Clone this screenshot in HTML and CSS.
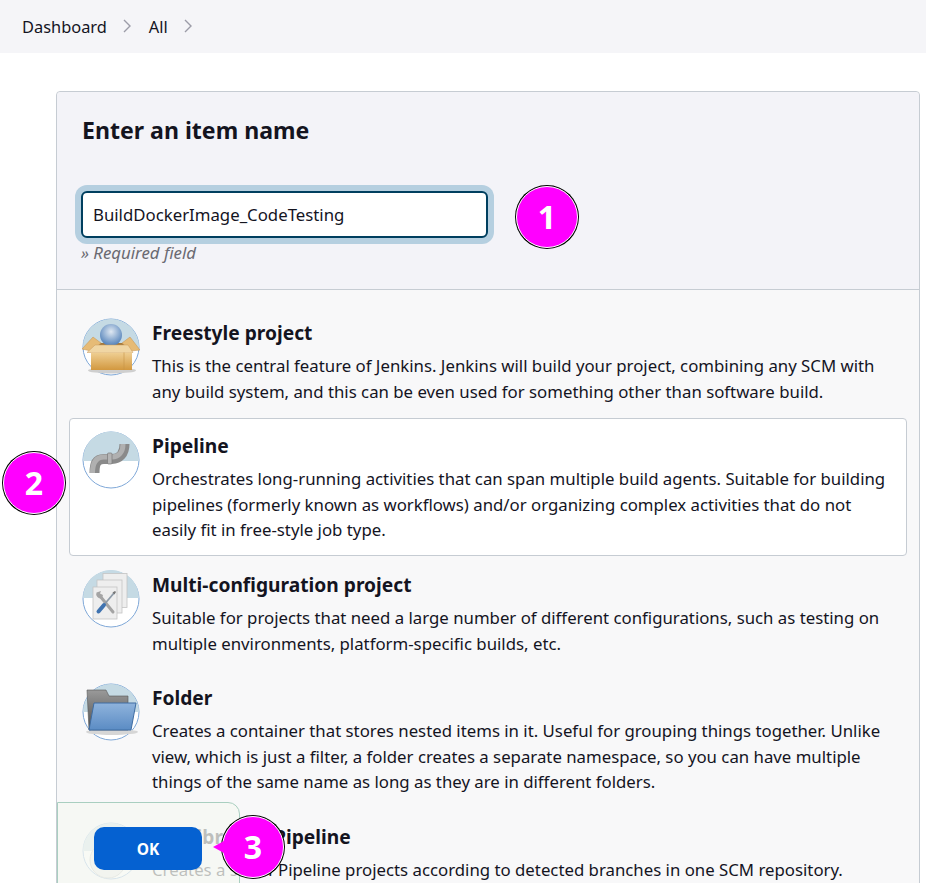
FILE: index.html
```html
<!DOCTYPE html>
<html lang="en">
<head>
<meta charset="UTF-8">
<meta name="viewport" content="width=device-width, initial-scale=1.0">
<title>New Item</title>
<link rel="stylesheet" href="styles.css">
</head>
<body>
<nav class="breadcrumb">
    <a class="crumb">Dashboard</a>
    <svg class="chevron" viewBox="0 0 10 16"><path d="M2 2l6 6-6 6"/></svg>
    <a class="crumb">All</a>
    <svg class="chevron" viewBox="0 0 10 16"><path d="M2 2l6 6-6 6"/></svg>
</nav>

<main class="panel">
    <section class="name_section">
        <h2 class="name_title">Enter an item name</h2>
        <div class="name_input">BuildDockerImage_CodeTesting</div>
        <p class="required">» Required field</p>
    </section>

    <ul class="item_list">
        <li class="item">
            <svg class="item_icon" viewBox="0 0 58 58">
                <defs>
                    <radialGradient id="ball" cx="0.5" cy="0.35" r="0.65"><stop offset="0" stop-color="#dfe8f2"/><stop offset="1" stop-color="#4f7fb8"/></radialGradient>
                    <linearGradient id="carton" x1="0" y1="0" x2="0" y2="1"><stop offset="0" stop-color="#efcf93"/><stop offset="1" stop-color="#d2983f"/></linearGradient>
                </defs>
                <circle class="disc" cx="29" cy="29" r="28"/>
                <path class="disc_top" d="M1 29a28 28 0 0 1 56 0z"/>
                <ellipse cx="30" cy="52.500" rx="24" ry="3" fill="#cfcfcf"/>
                <path d="M12 34L18 25H42L48 34z" fill="#a47a3e"/>
                <circle cx="29" cy="17" r="11" fill="url(#ball)"/>
                <path d="M19 25L11 19 0 31 9 33z" fill="#e6bb76" stroke="#c4934e" stroke-width=".5"/>
                <path d="M40 25L48 19 58 32 49 33z" fill="#e6bb76" stroke="#c4934e" stroke-width=".5"/>
                <path d="M5 34.500L13 27H46L51 34.500z" fill="#f0d6a4" stroke="#c9995a" stroke-width=".5"/>
                <rect x="9" y="34.500" width="41" height="17.500" fill="url(#carton)"/>
                <path d="M42 34.500V52" stroke="#c79348" stroke-width=".6"/>
            </svg>
            <div class="item_body">
                <h3 class="item_title">Freestyle project</h3>
                <p class="item_desc">This is the central feature of Jenkins. Jenkins will build your project, combining any SCM with any build system, and this can be even used for something other than software build.</p>
            </div>
        </li>
        <li class="item selected">
            <svg class="item_icon" viewBox="0 0 58 58">
                <circle class="disc" cx="29" cy="29" r="28"/>
                <path class="disc_top" d="M1 30V28.500a28 28 0 0 1 56 0V30z"/>
                <path d="M42.500 13C42.500 23 37 28 30 28H22C14 28 12.500 33 12.500 42" fill="none" stroke="#8a8a8a" stroke-width="10"/>
                <path d="M41 13C41 22 36 26 30 26H22C13 26 10.500 33 10.500 42" fill="none" stroke="#b0b0b0" stroke-width="5"/>
                <rect x="25.500" y="22" width="4.500" height="11" rx="1" fill="#b5b5b5" stroke="#7a7a7a" stroke-width=".7"/>
            </svg>
            <div class="item_body">
                <h3 class="item_title">Pipeline</h3>
                <p class="item_desc">Orchestrates long-running activities that can span multiple build agents. Suitable for building pipelines (formerly known as workflows) and/or organizing complex activities that do not easily fit in free-style job type.</p>
            </div>
        </li>
        <li class="item">
            <svg class="item_icon" viewBox="0 0 58 58">
                <circle class="disc" cx="29" cy="29" r="28"/>
                <path class="disc_top" d="M1 28a28 28 0 0 1 56 0z"/>
                <rect class="page" x="21" y="3.500" width="24" height="34"/>
                <rect class="page" x="15" y="10" width="25" height="33"/>
                <rect class="page" x="11" y="17" width="24" height="32"/>
                <path d="M18 26L31 42" stroke="#a4a4a4" stroke-width="3" stroke-linecap="round"/>
                <path d="M14.500 22.500a4.200 4.200 0 0 0 5.500 5.500l1-3-3-1.500 1-2.500z" fill="#a4a4a4"/>
                <path d="M32 23L21 36" stroke="#8e9ba8" stroke-width="1.800"/>
                <path d="M30.500 22.500l2.500-1.500 1 1-1.500 2.500z" fill="#777"/>
                <path d="M22 35L16.500 41.500" stroke="#3f73b0" stroke-width="4" stroke-linecap="round"/>
            </svg>
            <div class="item_body">
                <h3 class="item_title">Multi-configuration project</h3>
                <p class="item_desc">Suitable for projects that need a large number of different configurations, such as testing on multiple environments, platform-specific builds, etc.</p>
            </div>
        </li>
        <li class="item">
            <svg class="item_icon" viewBox="0 0 58 58">
                <defs>
                    <linearGradient id="folder_back" x1="0" y1="0" x2="0" y2="1"><stop offset="0" stop-color="#9a9a9a"/><stop offset="1" stop-color="#4e4e4e"/></linearGradient>
                    <linearGradient id="folder_front" x1="0" y1="0" x2="0" y2="1"><stop offset="0" stop-color="#8fb3dc"/><stop offset="1" stop-color="#5b8cc4"/></linearGradient>
                </defs>
                <circle class="disc" cx="29" cy="29" r="28"/>
                <path class="disc_top" d="M1 29a28 28 0 0 1 56 0z"/>
                <ellipse cx="30" cy="49" rx="26" ry="3" fill="#d6d6d6"/>
                <path d="M5 7H24L27 13H46V47H7z" fill="url(#folder_back)" stroke="#555" stroke-width=".6"/>
                <path d="M12 20H54L49 47H7z" fill="url(#folder_front)" stroke="#3f6da3" stroke-width="1"/>
            </svg>
            <div class="item_body">
                <h3 class="item_title">Folder</h3>
                <p class="item_desc">Creates a container that stores nested items in it. Useful for grouping things together. Unlike view, which is just a filter, a folder creates a separate namespace, so you can have multiple things of the same name as long as they are in different folders.</p>
            </div>
        </li>
        <li class="item">
            <svg class="item_icon" viewBox="0 0 58 58">
                <circle class="disc" cx="29" cy="29" r="28"/>
                <path class="disc_top" d="M1 29a28 28 0 0 1 56 0z"/>
                <circle cx="26" cy="38" r="18" fill="#e8e8e8" stroke="#bbb"/>
            </svg>
            <div class="item_body">
                <h3 class="item_title">Multibranch Pipeline</h3>
                <p class="item_desc">Creates a set of Pipeline projects according to detected branches in one SCM repository.</p>
            </div>
        </li>
    </ul>
</main>

<div class="bottom_bar">
    <button class="ok_button">OK</button>
</div>

<div class="marker marker_one">1</div>
<div class="marker marker_two">2</div>
<div class="marker marker_three">3</div>
</body>
</html>
```

FILE: styles.css
```css
* {
    margin: 0;
    padding: 0;
    box-sizing: border-box;
    font-family: "Noto Sans", sans-serif;
}

html, body {
    height: 883px;
    overflow: hidden;
}

body {
    position: relative;
    background: #ffffff;
    color: #14141f;
    font-size: 16px;
}

.breadcrumb {
    height: 53px;
    background: #f5f5f8;
    display: flex;
    align-items: center;
    padding-left: 22px;
}

.crumb {
    color: #14141f;
    font-size: 16.400px;
    line-height: 51px;
}

.chevron {
    width: 10px;
    height: 16px;
    margin: -2px 17px 0 15px;
}

.chevron path {
    fill: none;
    stroke: #9c9ca8;
    stroke-width: 1.4;
}

.panel {
    margin: 38px 6px 0 56px;
    border: 1px solid #c6ccd3;
    border-radius: 4px;
    background: #f8f8f9;
}

.name_section {
    height: 198px;
    padding: 22px 24px 0 24px;
    background: #f3f3f8;
    border-bottom: 1px solid #c6ccd3;
    border-radius: 4px 4px 0 0;
}

.name_title {
    font-size: 23.100px;
    font-weight: 700;
    line-height: 32px;
    margin-bottom: 45px;
    padding-left: 1px;
}

.name_input {
    width: 407px;
    height: 47px;
    border: 2px solid #003f5f;
    border-radius: 6px;
    background: #ffffff;
    box-shadow: 0 0 0 6px #b5cfe0;
    padding-left: 10px;
    line-height: 44px;
    font-size: 16.800px;
}

.required {
    margin-top: 3px;
    font-size: 16.800px;
    font-style: italic;
    line-height: 24px;
    color: #6a6a72;
}

.item_list {
    list-style: none;
    padding: 15px 12px 0 12px;
}

.item {
    display: flex;
    column-gap: 12px;
    padding: 12px;
    margin-bottom: 1px;
    border: 1px solid transparent;
    border-radius: 4px;
}

.item.selected {
    background: #ffffff;
    border-color: #c6ccd3;
}

.item_icon {
    width: 58px;
    height: 58px;
    flex-shrink: 0;
}

.disc {
    fill: #ffffff;
    stroke: #7fa8d8;
    stroke-width: 1;
}

.disc_top {
    fill: #c5dae4;
}

.page {
    fill: #eeeeee;
    stroke: #c4c4c4;
    stroke-width: 0.800;
}

.item_title {
    font-size: 19.200px;
    font-weight: 700;
    line-height: 30px;
    margin-bottom: 5px;
}

.item_desc {
    font-size: 16.800px;
    line-height: 25.600px;
}

.bottom_bar {
    position: absolute;
    left: 57px;
    top: 802px;
    width: 183px;
    height: 90px;
    background: rgba(246, 248, 241, 0.75);
    border: 1px solid #a9cfc0;
    border-radius: 0 12px 0 0;
    padding: 24px 0 0 36px;
}

.ok_button {
    width: 108px;
    height: 43px;
    border: none;
    border-radius: 10px;
    background: #0561d1;
    color: #ffffff;
    font-size: 15.500px;
    font-weight: 700;
}

.marker {
    position: absolute;
    width: 62px;
    height: 62px;
    border-radius: 50%;
    background: #ff00ff;
    border: 1px solid #ffffff;
    box-shadow: 0 0 0 1px #000000;
    color: #ffffff;
    font-size: 32px;
    font-weight: 700;
    text-align: center;
    line-height: 60px;
}

.marker_one {
    left: 516px;
    top: 186px;
}

.marker_two {
    left: 3px;
    top: 452px;
}

.marker_three {
    left: 222px;
    top: 816px;
}

.marker_three::before {
    content: "";
    position: absolute;
    left: -10px;
    top: 24px;
    border: 6px solid transparent;
    border-left: none;
    border-right: 11px solid #ff00ff;
}
```
